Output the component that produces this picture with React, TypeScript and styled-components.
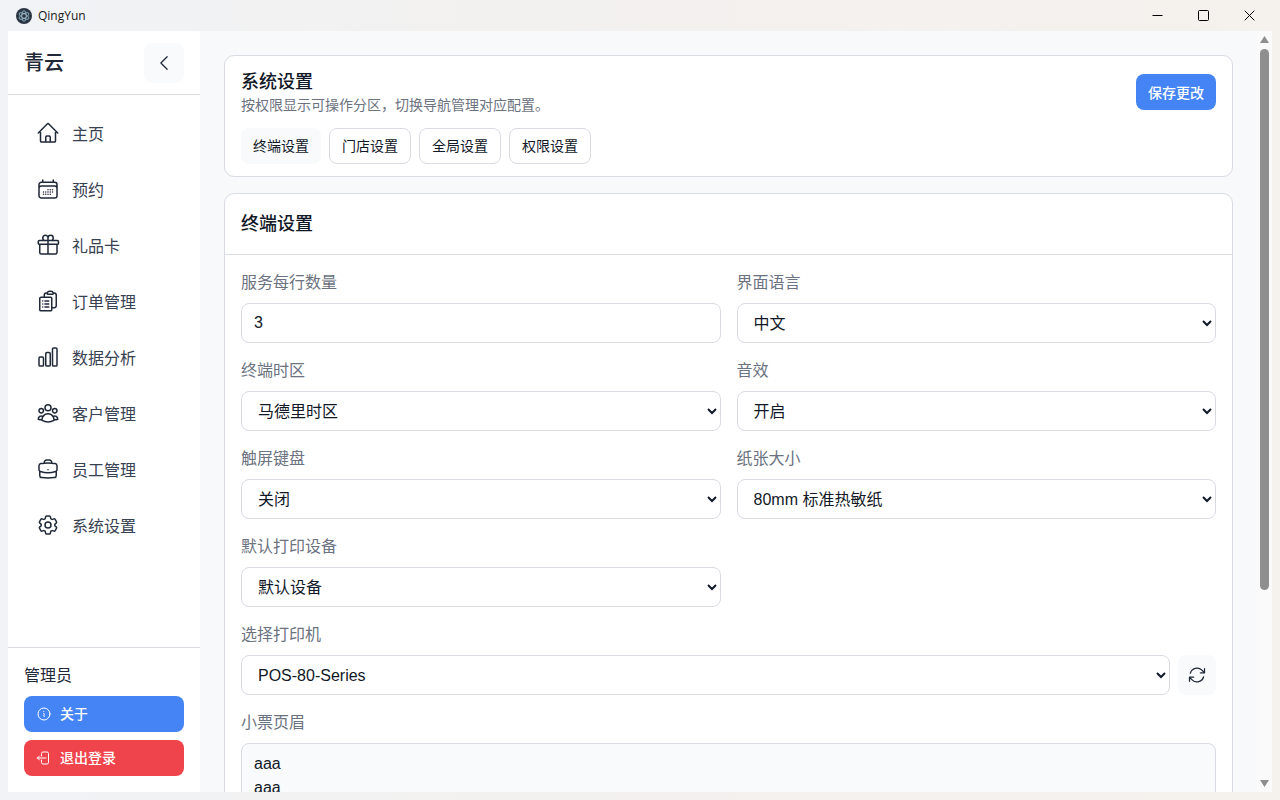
import React from 'react'
import styled, { createGlobalStyle } from 'styled-components'
import {
  HiOutlineArrowLeftStartOnRectangle,
  HiOutlineArrowPath,
  HiOutlineBriefcase,
  HiOutlineCalendarDays,
  HiOutlineChartBar,
  HiOutlineChevronLeft,
  HiOutlineClipboardDocumentList,
  HiOutlineCog6Tooth,
  HiOutlineGift,
  HiOutlineHome,
  HiOutlineInformationCircle,
  HiOutlineUserGroup,
} from 'react-icons/hi2'

const GlobalStyle = createGlobalStyle`
  html, body, #root {
    height: 100%;
  }
  body {
    margin: 0;
    overflow: hidden;
    color: #111827;
    font-family: "Liberation Sans", "Noto Sans CJK SC", sans-serif;
    background: linear-gradient(90deg, #f1f3f6 0, #f3f1ef 45%, #f5f1ed 100%);
  }
  * {
    box-sizing: border-box;
  }
`

const navItems = [
  { label: '主页', icon: HiOutlineHome },
  { label: '预约', icon: HiOutlineCalendarDays },
  { label: '礼品卡', icon: HiOutlineGift },
  { label: '订单管理', icon: HiOutlineClipboardDocumentList },
  { label: '数据分析', icon: HiOutlineChartBar },
  { label: '客户管理', icon: HiOutlineUserGroup },
  { label: '员工管理', icon: HiOutlineBriefcase },
  { label: '系统设置', icon: HiOutlineCog6Tooth },
]

const tabs = ['终端设置', '门店设置', '全局设置', '权限设置']

const Select = ({ value }: { value: string }) => (
  <FieldSelect defaultValue={value}>
    <option>{value}</option>
  </FieldSelect>
)

const App = () => (
  <>
    <GlobalStyle />
    <Window>
      <TitleBar>
        <Logo viewBox="0 0 16 16">
          <circle cx="8" cy="8" r="8" fill="#2b3645" />
          <g fill="none" stroke="#9fc3cf" strokeWidth="0.8">
            <ellipse cx="8" cy="8" rx="5.4" ry="2.2" transform="rotate(30 8 8)" />
            <ellipse cx="8" cy="8" rx="5.4" ry="2.2" transform="rotate(90 8 8)" />
            <ellipse cx="8" cy="8" rx="5.4" ry="2.2" transform="rotate(150 8 8)" />
          </g>
        </Logo>
        <AppName>QingYun</AppName>
        <WindowButtons>
          <WindowButton>
            <svg width="11" height="11" viewBox="0 0 11 11">
              <path d="M0.5 5.5h10" stroke="#000" fill="none" />
            </svg>
          </WindowButton>
          <WindowButton>
            <svg width="11" height="11" viewBox="0 0 11 11">
              <rect x="0.5" y="0.5" width="10" height="10" rx="1" stroke="#000" fill="none" />
            </svg>
          </WindowButton>
          <WindowButton>
            <svg width="11" height="11" viewBox="0 0 11 11">
              <path d="M0.7 0.7l9.6 9.6M10.3 0.7l-9.6 9.6" stroke="#000" fill="none" />
            </svg>
          </WindowButton>
        </WindowButtons>
      </TitleBar>
      <Body>
        <Sidebar>
          <SidebarHeader>
            <Brand>青云</Brand>
            <CollapseButton>
              <HiOutlineChevronLeft size={20} />
            </CollapseButton>
          </SidebarHeader>
          <Nav>
            {navItems.map(({ label, icon: Icon }) => (
              <NavItem key={label}>
                <Icon size={24} />
                {label}
              </NavItem>
            ))}
          </Nav>
          <SidebarFooter>
            <UserName>管理员</UserName>
            <FooterButton $color="#4584f4">
              <HiOutlineInformationCircle size={16} />
              关于
            </FooterButton>
            <FooterButton $color="#ef444c">
              <HiOutlineArrowLeftStartOnRectangle size={16} />
              退出登录
            </FooterButton>
          </SidebarFooter>
        </Sidebar>
        <Main>
          <Content>
            <TopCard>
              <TopRow>
                <div>
                  <PageTitle>系统设置</PageTitle>
                  <PageHint>按权限显示可操作分区，切换导航管理对应配置。</PageHint>
                </div>
                <SaveButton>保存更改</SaveButton>
              </TopRow>
              <Tabs>
                {tabs.map((tab, index) => (
                  <Tab key={tab} $active={index === 0}>
                    {tab}
                  </Tab>
                ))}
              </Tabs>
            </TopCard>
            <Card>
              <CardHeader>终端设置</CardHeader>
              <Form>
                <Field>
                  <Label>服务每行数量</Label>
                  <Input defaultValue="3" />
                </Field>
                <Field>
                  <Label>界面语言</Label>
                  <Select value="中文" />
                </Field>
                <Field>
                  <Label>终端时区</Label>
                  <Select value="马德里时区" />
                </Field>
                <Field>
                  <Label>音效</Label>
                  <Select value="开启" />
                </Field>
                <Field>
                  <Label>触屏键盘</Label>
                  <Select value="关闭" />
                </Field>
                <Field>
                  <Label>纸张大小</Label>
                  <Select value="80mm 标准热敏纸" />
                </Field>
                <Field>
                  <Label>默认打印设备</Label>
                  <Select value="默认设备" />
                </Field>
                <Field $wide>
                  <Label>选择打印机</Label>
                  <PrinterRow>
                    <Select value="POS-80-Series" />
                    <RefreshButton>
                      <HiOutlineArrowPath size={20} />
                    </RefreshButton>
                  </PrinterRow>
                </Field>
                <Field $wide>
                  <Label>小票页眉</Label>
                  <TextArea defaultValue={'aaa\naaa\naaa'} />
                </Field>
              </Form>
            </Card>
          </Content>
          <ScrollBar>
            <ScrollArrow $up />
            <ScrollThumb />
            <ScrollArrow />
          </ScrollBar>
        </Main>
      </Body>
    </Window>
  </>
)

const Window = styled.div`
  display: flex;
  flex-direction: column;
  height: 100vh;
`

const TitleBar = styled.div`
  display: flex;
  align-items: center;
  flex: 0 0 31px;
  padding: 0 8px 0 16px;
`

const Logo = styled.svg`
  width: 16px;
  height: 16px;
`

const AppName = styled.span`
  margin-left: 6px;
  font-family: "Open Sans", sans-serif;
  font-size: 12px;
  color: #1a1a1a;
`

const WindowButtons = styled.div`
  display: flex;
  margin-left: auto;
`

const WindowButton = styled.div`
  display: flex;
  align-items: center;
  justify-content: center;
  width: 46px;
  height: 31px;
`

const Body = styled.div`
  display: flex;
  flex: 1;
  min-height: 0;
  padding: 0 8px 8px;
`

const Sidebar = styled.aside`
  display: flex;
  flex-direction: column;
  flex: 0 0 192px;
  background: #fff;
`

const SidebarHeader = styled.div`
  display: flex;
  align-items: center;
  justify-content: space-between;
  height: 64px;
  padding: 0 16px;
  border-bottom: 1px solid #dcdde3;
`

const Brand = styled.div`
  margin-top: -2px;
  font-size: 20px;
  font-weight: 500;
  color: #1f2937;
`

const CollapseButton = styled.button`
  display: flex;
  align-items: center;
  justify-content: center;
  width: 40px;
  height: 40px;
  padding: 0;
  border: 0;
  border-radius: 8px;
  color: #1f2937;
  background: #f9fafb;
`

const Nav = styled.nav`
  display: flex;
  flex-direction: column;
  gap: 8px;
  flex: 1;
  padding: 14px 12px;
`

const NavItem = styled.a`
  display: flex;
  align-items: center;
  gap: 12px;
  height: 48px;
  padding: 0 16px;
  font-size: 16px;
  color: #374151;

  svg {
    color: #1f2937;
  }
`

const SidebarFooter = styled.div`
  display: flex;
  flex-direction: column;
  gap: 8px;
  padding: 16px;
  border-top: 1px solid #dcdde3;
`

const UserName = styled.div`
  height: 24px;
  font-size: 16px;
  line-height: 24px;
  color: #1f2937;
`

const FooterButton = styled.button<{ $color: string }>`
  display: flex;
  align-items: center;
  flex: 0 0 36px;
  gap: 8px;
  padding: 0 12px 2px;
  border: 0;
  border-radius: 8px;
  font-family: inherit;
  font-size: 14px;
  font-weight: 500;
  color: #fff;
  background: ${(p) => p.$color};

  svg {
    margin-top: 2px;
  }
`

const Main = styled.main`
  display: flex;
  flex: 1;
  min-width: 0;
  background: #f8f9fb;
`

const Content = styled.div`
  flex: 1;
  min-width: 0;
  padding: 24px;
  overflow: hidden;
`

const ScrollBar = styled.div`
  display: flex;
  flex-direction: column;
  align-items: center;
  flex: 0 0 15px;
  background: #fafafa;
`

const ScrollArrow = styled.div<{ $up?: boolean }>`
  flex: 0 0 18px;
  width: 9px;
  margin-top: ${(p) => (p.$up ? '0' : 'auto')};
  background: #8f8f8f;
  clip-path: ${(p) =>
    p.$up
      ? 'polygon(50% 5px, 100% 12px, 0 12px)'
      : 'polygon(0 6px, 100% 6px, 50% 13px)'};
`

const ScrollThumb = styled.div`
  flex: 0 0 541px;
  width: 9px;
  border-radius: 5px;
  background: #8f8f8f;
`

const Card = styled.section`
  border: 1px solid #d9dbe3;
  border-radius: 10px;
  background: #fff;
`

const TopCard = styled(Card)`
  margin-bottom: 16px;
  padding: 16px 16px 12px;
`

const TopRow = styled.div`
  display: flex;
  align-items: flex-start;
  justify-content: space-between;
  margin-bottom: 13px;
`

const PageTitle = styled.h1`
  margin: 0;
  font-size: 18px;
  font-weight: 500;
  line-height: 20px;
  color: #111827;
`

const PageHint = styled.p`
  margin: 3px 0 0;
  font-size: 14px;
  line-height: 20px;
  color: #6b7280;
`

const Tabs = styled.div`
  display: flex;
  gap: 8px;
`

const Tab = styled.button<{ $active?: boolean }>`
  height: 36px;
  padding: 0 12px 2px;
  border: ${(p) => (p.$active ? '0' : '1px solid #d9dbe3')};
  border-radius: 8px;
  font-family: inherit;
  font-size: 14px;
  color: #111827;
  background: ${(p) => (p.$active ? '#f9fafb' : '#fff')};
`

const SaveButton = styled.button`
  width: 80px;
  height: 36px;
  margin-top: 2px;
  padding: 0;
  border: 0;
  border-radius: 8px;
  font-family: inherit;
  font-size: 14px;
  font-weight: 500;
  color: #fff;
  background: #4584f4;
`

const CardHeader = styled.h2`
  margin: 0;
  height: 61px;
  padding: 0 16px;
  border-bottom: 1px solid #d9dbe3;
  font-size: 18px;
  font-weight: 500;
  line-height: 60px;
  color: #111827;
`

const Form = styled.div`
  display: grid;
  grid-template-columns: 1fr 1fr;
  gap: 16px;
  padding: 16px;
`

const Field = styled.div<{ $wide?: boolean }>`
  display: flex;
  flex-direction: column;
  gap: 8px;
  min-width: 0;
  grid-column: ${(p) => (p.$wide ? '1 / -1' : 'auto')};
`

const Label = styled.label`
  font-size: 16px;
  line-height: 24px;
  color: #6b7280;
`

const Input = styled.input`
  width: 100%;
  height: 40px;
  padding: 0 12px;
  border: 1px solid #d9dbe3;
  border-radius: 8px;
  font-family: inherit;
  font-size: 16px;
  color: #111827;
  background: #fff;
`

const FieldSelect = styled.select`
  width: 100%;
  min-width: 0;
  height: 40px;
  padding: 0 12px;
  border: 1px solid #d9dbe3;
  border-radius: 8px;
  font-family: inherit;
  font-size: 16px;
  color: #111827;
  background: #fff;
`

const PrinterRow = styled.div`
  display: flex;
  gap: 8px;
`

const RefreshButton = styled.button`
  display: flex;
  align-items: center;
  justify-content: center;
  flex: 0 0 38px;
  height: 40px;
  padding: 0;
  border: 0;
  border-radius: 8px;
  color: #1f2937;
  background: #f9fafb;
`

const TextArea = styled.textarea`
  width: 100%;
  height: 96px;
  padding: 8px 12px;
  border: 1px solid #d9dbe3;
  border-radius: 8px;
  font-family: inherit;
  font-size: 16px;
  line-height: 24px;
  color: #111827;
  background: #f9fafb;
  resize: none;
`

export default App
